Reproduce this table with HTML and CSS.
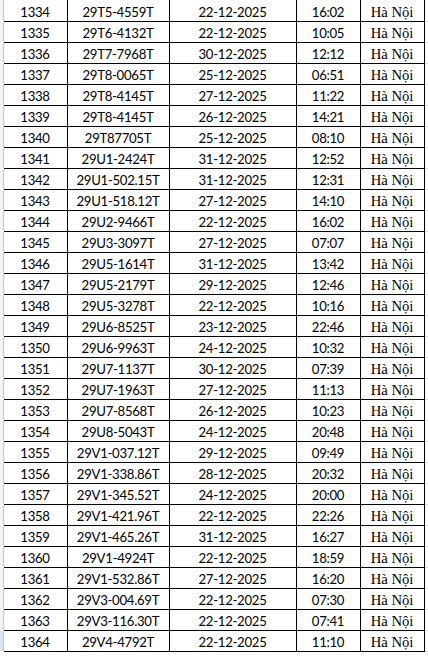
FILE: index.html
```html
<!DOCTYPE html>
<html lang="vi">
<head>
<meta charset="utf-8">
<title>Danh sách phương tiện</title>
<link rel="stylesheet" href="styles.css">
</head>
<body>
<div class="sheet">
<table class="grid">
<colgroup>
<col class="c-gut"><col class="c-stt"><col class="c-plate"><col class="c-date"><col class="c-time"><col class="c-place"><col class="c-end">
</colgroup>
<tbody>
<tr><td class="gut"></td><td>1334</td><td>29T5-4559T</td><td>22-12-2025</td><td>16:02</td><td class="place">Hà Nội</td><td class="end"></td></tr>
<tr><td class="gut"></td><td>1335</td><td>29T6-4132T</td><td>22-12-2025</td><td>10:05</td><td class="place">Hà Nội</td><td class="end"></td></tr>
<tr><td class="gut"></td><td>1336</td><td>29T7-7968T</td><td>30-12-2025</td><td>12:12</td><td class="place">Hà Nội</td><td class="end"></td></tr>
<tr><td class="gut"></td><td>1337</td><td>29T8-0065T</td><td>25-12-2025</td><td>06:51</td><td class="place">Hà Nội</td><td class="end"></td></tr>
<tr><td class="gut"></td><td>1338</td><td>29T8-4145T</td><td>27-12-2025</td><td>11:22</td><td class="place">Hà Nội</td><td class="end"></td></tr>
<tr><td class="gut"></td><td>1339</td><td>29T8-4145T</td><td>26-12-2025</td><td>14:21</td><td class="place">Hà Nội</td><td class="end"></td></tr>
<tr><td class="gut"></td><td>1340</td><td>29T87705T</td><td>25-12-2025</td><td>08:10</td><td class="place">Hà Nội</td><td class="end"></td></tr>
<tr><td class="gut"></td><td>1341</td><td>29U1-2424T</td><td>31-12-2025</td><td>12:52</td><td class="place">Hà Nội</td><td class="end"></td></tr>
<tr><td class="gut"></td><td>1342</td><td>29U1-502.15T</td><td>31-12-2025</td><td>12:31</td><td class="place">Hà Nội</td><td class="end"></td></tr>
<tr><td class="gut"></td><td>1343</td><td>29U1-518.12T</td><td>27-12-2025</td><td>14:10</td><td class="place">Hà Nội</td><td class="end"></td></tr>
<tr><td class="gut"></td><td>1344</td><td>29U2-9466T</td><td>22-12-2025</td><td>16:02</td><td class="place">Hà Nội</td><td class="end"></td></tr>
<tr><td class="gut"></td><td>1345</td><td>29U3-3097T</td><td>27-12-2025</td><td>07:07</td><td class="place">Hà Nội</td><td class="end"></td></tr>
<tr><td class="gut"></td><td>1346</td><td>29U5-1614T</td><td>31-12-2025</td><td>13:42</td><td class="place">Hà Nội</td><td class="end"></td></tr>
<tr><td class="gut"></td><td>1347</td><td>29U5-2179T</td><td>29-12-2025</td><td>12:46</td><td class="place">Hà Nội</td><td class="end"></td></tr>
<tr><td class="gut"></td><td>1348</td><td>29U5-3278T</td><td>22-12-2025</td><td>10:16</td><td class="place">Hà Nội</td><td class="end"></td></tr>
<tr><td class="gut"></td><td>1349</td><td>29U6-8525T</td><td>23-12-2025</td><td>22:46</td><td class="place">Hà Nội</td><td class="end"></td></tr>
<tr><td class="gut"></td><td>1350</td><td>29U6-9963T</td><td>24-12-2025</td><td>10:32</td><td class="place">Hà Nội</td><td class="end"></td></tr>
<tr><td class="gut"></td><td>1351</td><td>29U7-1137T</td><td>30-12-2025</td><td>07:39</td><td class="place">Hà Nội</td><td class="end"></td></tr>
<tr><td class="gut"></td><td>1352</td><td>29U7-1963T</td><td>27-12-2025</td><td>11:13</td><td class="place">Hà Nội</td><td class="end"></td></tr>
<tr><td class="gut"></td><td>1353</td><td>29U7-8568T</td><td>26-12-2025</td><td>10:23</td><td class="place">Hà Nội</td><td class="end"></td></tr>
<tr><td class="gut"></td><td>1354</td><td>29U8-5043T</td><td>24-12-2025</td><td>20:48</td><td class="place">Hà Nội</td><td class="end"></td></tr>
<tr><td class="gut"></td><td>1355</td><td>29V1-037.12T</td><td>29-12-2025</td><td>09:49</td><td class="place">Hà Nội</td><td class="end"></td></tr>
<tr><td class="gut"></td><td>1356</td><td>29V1-338.86T</td><td>28-12-2025</td><td>20:32</td><td class="place">Hà Nội</td><td class="end"></td></tr>
<tr><td class="gut"></td><td>1357</td><td>29V1-345.52T</td><td>24-12-2025</td><td>20:00</td><td class="place">Hà Nội</td><td class="end"></td></tr>
<tr><td class="gut"></td><td>1358</td><td>29V1-421.96T</td><td>22-12-2025</td><td>22:26</td><td class="place">Hà Nội</td><td class="end"></td></tr>
<tr><td class="gut"></td><td>1359</td><td>29V1-465.26T</td><td>31-12-2025</td><td>16:27</td><td class="place">Hà Nội</td><td class="end"></td></tr>
<tr><td class="gut"></td><td>1360</td><td>29V1-4924T</td><td>22-12-2025</td><td>18:59</td><td class="place">Hà Nội</td><td class="end"></td></tr>
<tr><td class="gut"></td><td>1361</td><td>29V1-532.86T</td><td>27-12-2025</td><td>16:20</td><td class="place">Hà Nội</td><td class="end"></td></tr>
<tr><td class="gut"></td><td>1362</td><td>29V3-004.69T</td><td>22-12-2025</td><td>07:30</td><td class="place">Hà Nội</td><td class="end"></td></tr>
<tr><td class="gut"></td><td>1363</td><td>29V3-116.30T</td><td>22-12-2025</td><td>07:41</td><td class="place">Hà Nội</td><td class="end"></td></tr>
<tr class="last"><td class="gut sel"></td><td>1364</td><td>29V4-4792T</td><td>22-12-2025</td><td>11:10</td><td class="place">Hà Nội</td><td class="end"></td></tr>
</tbody>
</table>
</div>
</body>
</html>
```
FILE: styles.css
```css
html, body {
  margin: 0;
  padding: 0;
  background: #ffffff;
}

.sheet {
  width: 428px;
  height: 656px;
  overflow: hidden;
}

.grid {
  border-collapse: collapse;
  table-layout: fixed;
  width: 428px;
  font-family: Lato, "Open Sans", sans-serif;
  font-size: 13.2px;
  letter-spacing: -0.3px;
  color: #000000;
}

.c-gut { width: 3px; }
.c-stt { width: 64px; }
.c-plate { width: 102px; }
.c-date { width: 127px; }
.c-time { width: 64px; }
.c-place { width: 64px; }
.c-end { width: 4px; }

.grid td {
  height: 18px;
  padding: 2px 0 0 0;
  border: 1px solid #000000;
  text-align: center;
  vertical-align: middle;
  white-space: nowrap;
  line-height: 18px;
}

.grid tr:first-child td {
  border-top: 1px hidden;
  height: 18px;
  padding-top: 3px;
}

.grid td.gut {
  background: #f3f3f3;
  border-top: 1px solid #f3f3f3;
  border-bottom: 1px solid #f3f3f3;
  border-left: none;
  border-right: 1px solid #c6c6c6;
}

.grid td.gut.sel {
  background: #d9e5f5;
}

.grid td.place {
  font-family: "Liberation Serif", "Times New Roman", serif;
  font-size: 14.67px;
  letter-spacing: 0;
}

.grid td.end {
  border-left: none;
  border-right: none;
  border-top: 1px solid #dadada;
  border-bottom: 1px solid #dadada;
}
```
